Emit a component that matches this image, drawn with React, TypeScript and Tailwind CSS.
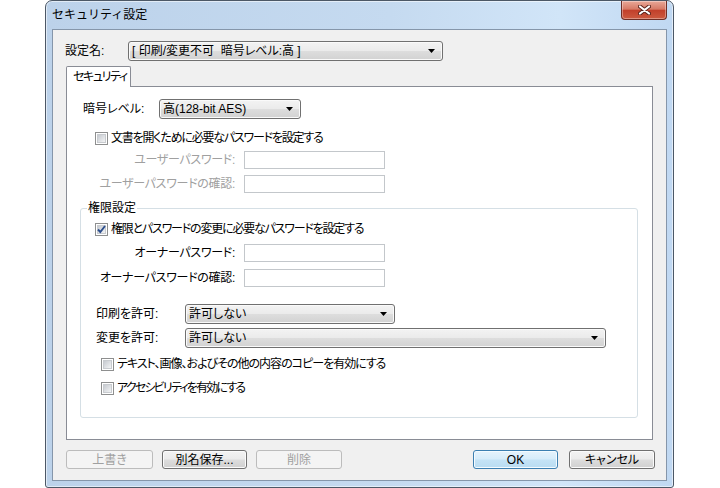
import React from "react";

function Arrow() {
  return (
    <svg width="7" height="4" viewBox="0 0 7 4" className="shrink-0">
      <path d="M0 0h7L3.5 4z" fill="#000" />
    </svg>
  );
}

function Combo({ text, className }: { text: string; className: string }) {
  return (
    <div
      className={`flex h-[20px] items-center justify-between rounded-[3px] border border-[#707070] bg-[linear-gradient(#f3f3f3,#ebebeb_48%,#dddddd_52%,#d2d2d2)] pl-[3px] pr-[7px] shadow-[inset_0_0_0_1px_#fafafa] ${className}`}
    >
      <span className="whitespace-pre leading-[14px]">{text}</span>
      <Arrow />
    </div>
  );
}

function TextBox() {
  return <div className="h-[18px] w-[141px] border border-[#c3c7cb] bg-white" />;
}

function Check({ checked = false }: { checked?: boolean }) {
  return (
    <span className="relative flex h-[13px] w-[13px] shrink-0 items-center justify-center border border-[#8e8f8f] bg-white">
      <span className="h-[9px] w-[9px] border border-[#c8cbcf] bg-[linear-gradient(135deg,#c6cad0,#f3f4f5)]" />
      {checked && (
        <svg width="13" height="13" viewBox="0 0 13 13" className="absolute -left-px -top-px">
          <path d="M3 6.5L5.3 9L10 3" fill="none" stroke="#2b4d8c" strokeWidth="1.9" />
        </svg>
      )}
    </span>
  );
}

function CheckRow({
  label,
  checked,
  tight = "tracking-[-1.2px]",
  className,
}: {
  label: string;
  checked?: boolean;
  tight?: string;
  className: string;
}) {
  return (
    <div className={`flex h-[16px] items-center gap-[3px] ${className}`}>
      <Check checked={checked} />
      <span className={`whitespace-nowrap leading-[14px] ${tight}`}>{label}</span>
    </div>
  );
}

function FieldRow({ label, width, disabled, className }: { label: string; width: string; disabled?: boolean; className: string }) {
  return (
    <div className={`flex h-[18px] items-center ${className}`}>
      <span className={`${width} whitespace-nowrap pr-[9px] text-right leading-[14px] tracking-[-0.3px] ${disabled ? "text-[#a0a0a0]" : ""}`}>
        {label}
      </span>
      <TextBox />
    </div>
  );
}

function Btn({ label, kind = "normal", className = "" }: { label: string; kind?: "normal" | "disabled" | "default"; className?: string }) {
  const look =
    kind === "disabled"
      ? "border-[#bcbcbc] bg-[#f4f4f4] text-[#a0a0a0]"
      : kind === "default"
        ? "border-[#3c7fb1] bg-[linear-gradient(#e6f3fc,#d6ecfa_48%,#c4e3f6_52%,#b9dcf2)] shadow-[inset_0_0_0_1px_#f4fbff]"
        : "border-[#707070] bg-[linear-gradient(#f3f3f3,#ebebeb_48%,#dddddd_52%,#d0d0d0)] shadow-[inset_0_0_0_1px_#fbfbfb]";
  return (
    <div className={`flex h-[19px] items-center justify-center rounded-[3px] border leading-[14px] ${look} ${className}`}>
      {label}
    </div>
  );
}

export default function App() {
  return (
    <div className="h-[488px] w-[720px] bg-white text-[12px] text-black [font-family:'Liberation_Sans','Noto_Sans_CJK_JP',sans-serif] [font-feature-settings:'palt']">
      <div className="ml-[45px] flex h-[488px] w-[629px] flex-col rounded-t-[7px] rounded-b-[3px] border border-[#4c5866] bg-[linear-gradient(90deg,#bcd2ea,#c5daf0_55%,#d1e5f8_82%,#c0d8f2)] px-[6px] pb-[6px] shadow-[inset_0_0_0_1px_rgba(255,255,255,0.55)]">
        {/* title bar */}
        <div className="flex h-[28px] items-start justify-between">
          <span className="mt-[7px] leading-[14px] [font-feature-settings:normal]">セキュリティ設定</span>
          <div className="flex h-[19px] w-[46px] items-center justify-center rounded-b-[4px] border border-t-0 border-[#6e2e26] bg-[linear-gradient(#e9a898,#d67a66_45%,#c2402b_52%,#cc5a40)] shadow-[inset_0_0_0_1px_rgba(255,255,255,0.35)]">
            <svg width="13" height="10" viewBox="0 0 13 10">
              <path d="M2 1.5L11 8.5M11 1.5L2 8.5" stroke="#5a231b" strokeWidth="4" strokeLinecap="round" />
              <path d="M2 1.5L11 8.5M11 1.5L2 8.5" stroke="#fff" strokeWidth="2.2" strokeLinecap="round" />
            </svg>
          </div>
        </div>

        {/* client area */}
        <div className="flex flex-1 flex-col border border-[#8596aa] bg-[#f0f0f0]">
          <div className="mt-[11px] flex h-[20px] items-center pl-[12px]">
            <span className="w-[63px] leading-[14px]">設定名:</span>
            <Combo text="[ 印刷/変更不可  暗号レベル:高 ]" className="w-[315px]" />
          </div>

          <div className="ml-[13px] mt-[5px] flex">
            <div className="relative z-10 -mb-px flex h-[21px] w-[65px] items-center rounded-t-[2px] border border-b-0 border-[#898c95] bg-white pl-[6px] leading-[14px] whitespace-nowrap tracking-[-1.4px]">
              セキュリティ
            </div>
          </div>

          <div className="mx-[13px] flex h-[354px] flex-col border border-[#898c95] bg-white">
            <div className="ml-[16px] mt-[12px] flex h-[20px] items-center">
              <span className="w-[76px] leading-[14px]">暗号レベル:</span>
              <Combo text="高(128-bit AES)" className="w-[142px]" />
            </div>
            <CheckRow label="文書を開くために必要なパスワードを設定する" className="ml-[28px] mt-[11px]" />
            <FieldRow label="ユーザーパスワード:" width="w-[177px]" disabled className="mt-[5px]" />
            <FieldRow label="ユーザーパスワードの確認:" width="w-[177px]" disabled className="mt-[6px]" />

            <fieldset className="ml-[13px] mt-[8px] flex w-[558px] flex-col rounded-[3px] border border-[#d5dfe5] pb-[21px]">
              <legend className="ml-[6px] px-[1px] leading-[14px]">権限設定</legend>
              <CheckRow label="権限とパスワードの変更に必要なパスワードを設定する" checked className="ml-[14px] mt-[6px]" />
              <FieldRow label="オーナーパスワード:" width="w-[163px]" className="mt-[7px]" />
              <FieldRow label="オーナーパスワードの確認:" width="w-[163px]" className="mt-[7px]" />
              <div className="ml-[15px] mt-[17px] flex h-[20px] items-center">
                <span className="w-[89px] leading-[14px]">印刷を許可:</span>
                <Combo text="許可しない" className="w-[210px]" />
              </div>
              <div className="ml-[15px] mt-[4px] flex h-[20px] items-center">
                <span className="w-[89px] leading-[14px]">変更を許可:</span>
                <Combo text="許可しない" className="w-[421px]" />
              </div>
              <CheckRow
                label="テキスト、画像、およびその他の内容のコピーを有効にする"
                tight="tracking-[-1px]"
                className="ml-[20px] mt-[8px]"
              />
              <CheckRow label="アクセシビリティを有効にする" tight="tracking-[-1.8px]" className="ml-[20px] mt-[8px]" />
            </fieldset>
          </div>

          <div className="mt-[10px] flex pl-[13px] pr-[11px]">
            <Btn label="上書き" kind="disabled" className="w-[87px]" />
            <Btn label="別名保存..." className="ml-[9px] w-[85px]" />
            <Btn label="削除" kind="disabled" className="ml-[9px] w-[86px]" />
            <div className="flex-1" />
            <Btn label="OK" kind="default" className="w-[85px]" />
            <Btn label="キャンセル" className="ml-[11px] w-[86px]" />
          </div>
        </div>
      </div>
    </div>
  );
}
